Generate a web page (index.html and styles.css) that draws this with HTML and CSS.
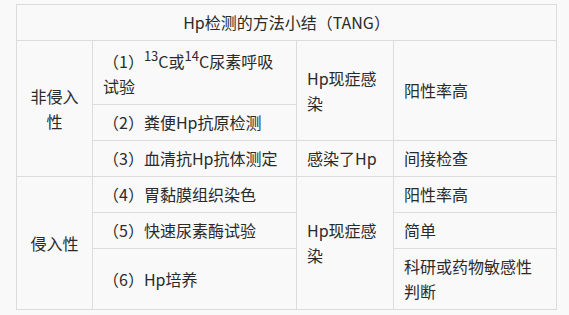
FILE: index.html
```html
<!DOCTYPE html>
<html lang="zh-CN">
<head>
<meta charset="utf-8">
<link rel="stylesheet" href="styles.css">
</head>
<body>
<div class="page">
<table class="summary">
  <colgroup>
    <col class="c1"><col class="c2"><col class="c3"><col class="c4">
  </colgroup>
  <thead>
    <tr><th colspan="4">Hp检测的方法小结（TANG）</th></tr>
  </thead>
  <tbody>
    <tr>
      <td rowspan="3" class="center">非侵入性</td>
      <td>（1）<sup>13</sup>C或<sup>14</sup>C尿素呼吸试验</td>
      <td rowspan="2">Hp现症感染</td>
      <td rowspan="2">阳性率高</td>
    </tr>
    <tr>
      <td>（2）粪便Hp抗原检测</td>
    </tr>
    <tr>
      <td>（3）血清抗Hp抗体测定</td>
      <td>感染了Hp</td>
      <td>间接检查</td>
    </tr>
    <tr>
      <td rowspan="3" class="center">侵入性</td>
      <td>（4）胃黏膜组织染色</td>
      <td rowspan="3">Hp现症感染</td>
      <td>阳性率高</td>
    </tr>
    <tr>
      <td>（5）快速尿素酶试验</td>
      <td>简单</td>
    </tr>
    <tr>
      <td>（6）Hp培养</td>
      <td>科研或药物敏感性判断</td>
    </tr>
  </tbody>
</table>
</div>
</body>
</html>
```

FILE: styles.css
```css
html, body {
  margin: 0;
  background: #f9f9f9;
}
.page {
  padding: 4px 0 0 16px;
}
.summary {
  border-collapse: collapse;
  table-layout: fixed;
  width: 540px;
  font-family: "Noto Sans CJK SC", "Microsoft YaHei", sans-serif;
  font-size: 16px;
  line-height: 25px;
  color: #2a2a2a;
}
.c1 { width: 76px; }
.c2 { width: 204px; }
.c3 { width: 97px; }
.c4 { width: 163px; }
.summary th,
.summary td {
  border: 1px solid #dcdcdc;
  padding: 5px 10px;
  vertical-align: middle;
  text-align: left;
  font-weight: normal;
}
.summary th {
  text-align: center;
}
.summary td.center {
  text-align: center;
}
.summary sup {
  font-size: 13px;
  line-height: 19px;
  vertical-align: 7px;
}
```
